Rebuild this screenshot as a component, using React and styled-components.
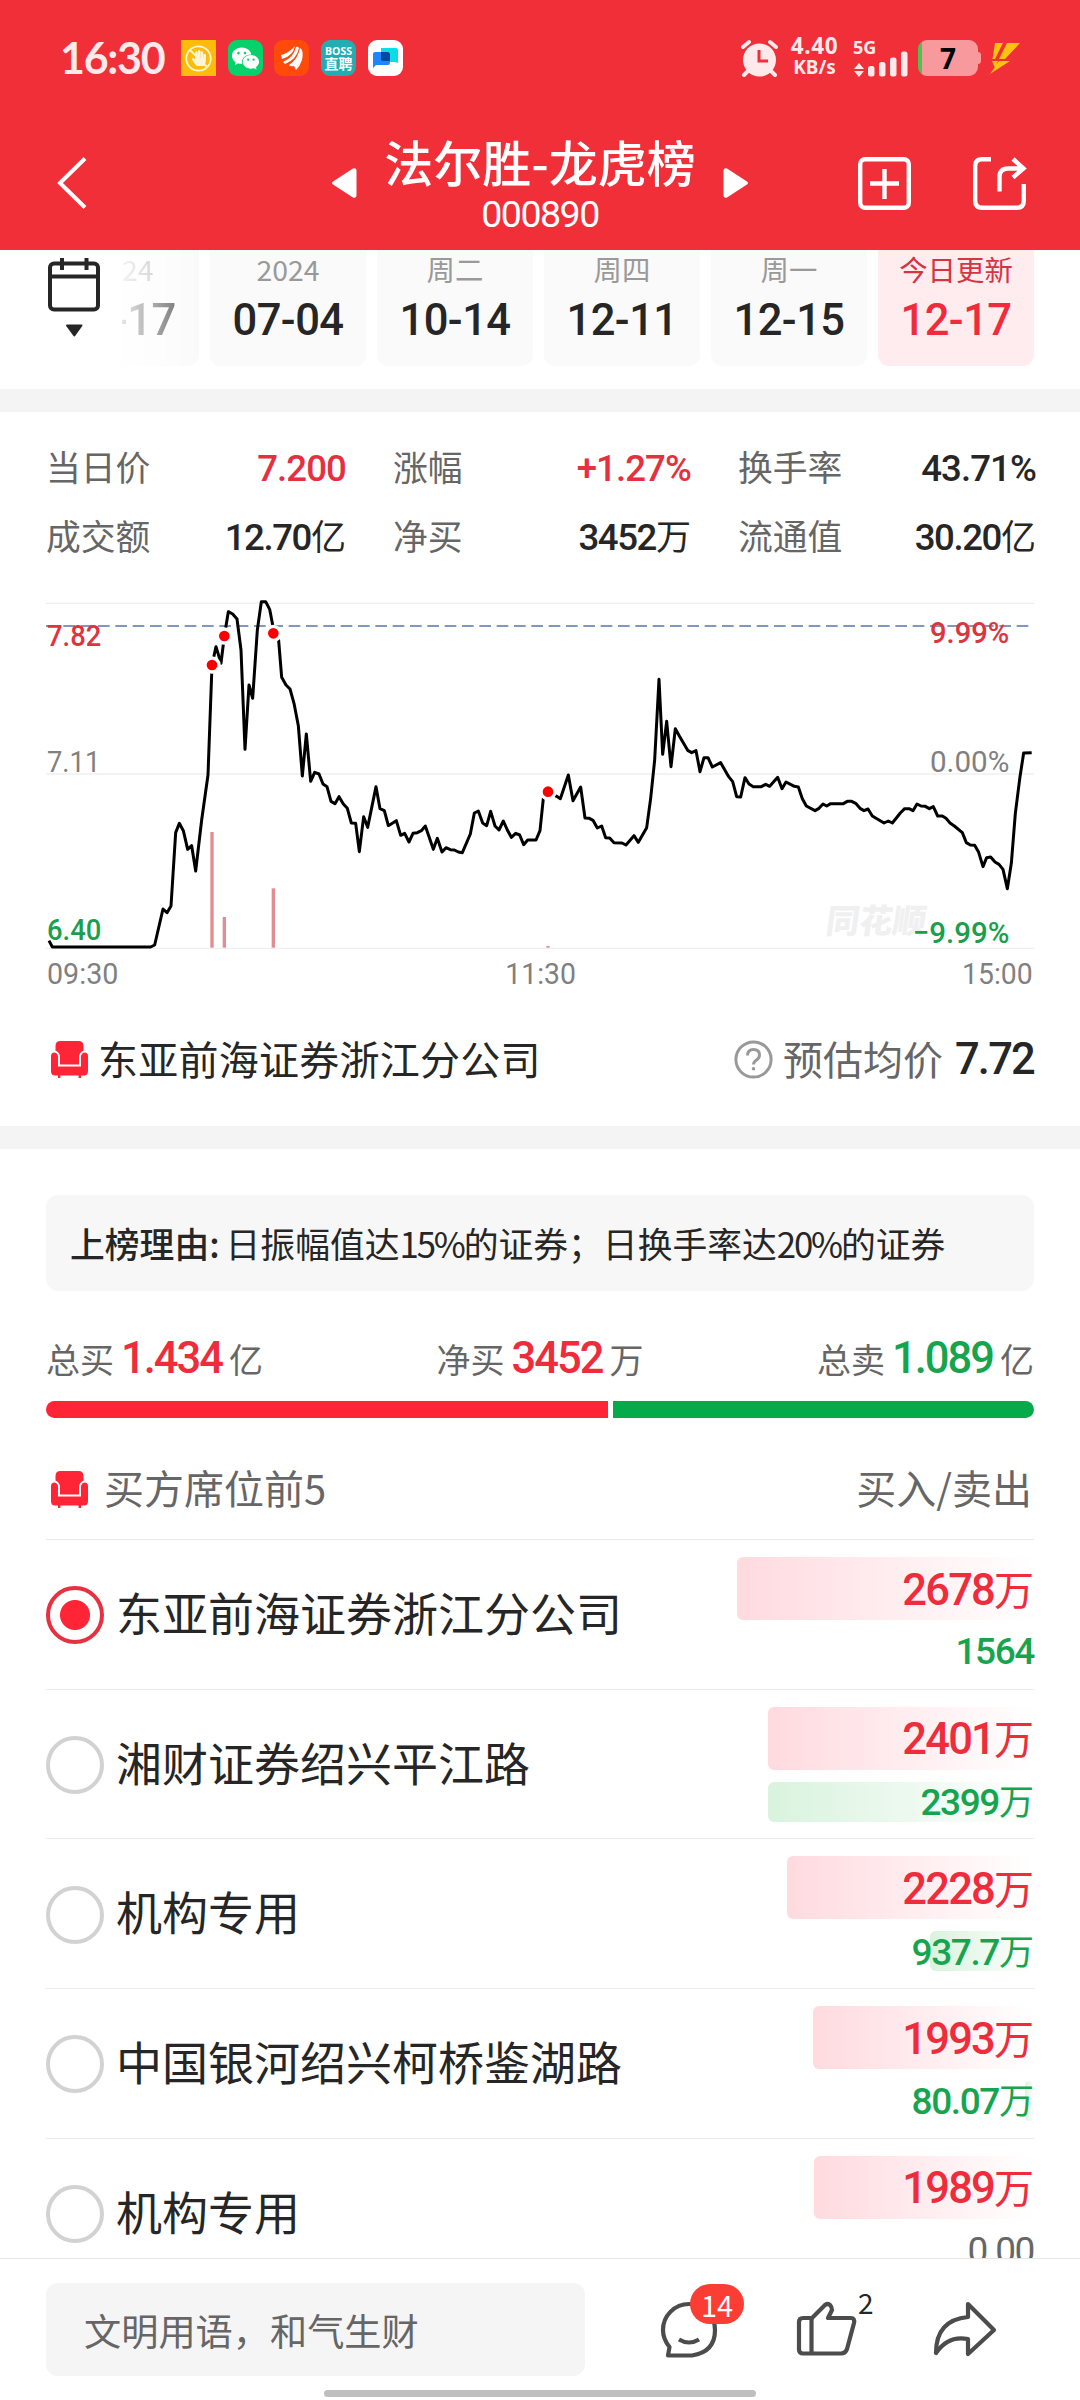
import React from "react";
import styled, { createGlobalStyle, css } from "styled-components";
import { AiFillWechat } from "react-icons/ai";
import { FaHandPaper } from "react-icons/fa";

const RED = "#ff2436";
const GREEN = "#07aa4b";
const INK = "#262626";
const GREY = "#666666";
const CJK = '"Noto Sans CJK SC", sans-serif';
const DIGITS = 'Roboto, "Noto Sans CJK SC", sans-serif';

const GlobalStyle = createGlobalStyle`
  * { box-sizing: border-box; }
  body { margin: 0; background: #fff; font-family: ${CJK}; color: ${INK}; }
`;

const Screen = styled.div`
  width: 1080px;
  height: 2400px;
  display: flex;
  flex-direction: column;
  overflow: hidden;
  background: #fff;
`;

const Icon = styled.svg`
  display: block;
  flex: none;
  overflow: visible;
`;

const Num = styled.span`
  display: inline-block;
  font-family: ${DIGITS};
  font-size: ${(p) => p.$size}px;
  font-weight: ${(p) => p.$weight || 500};
  letter-spacing: ${(p) => (p.$track === undefined ? -1 : p.$track)}px;
  padding-top: ${(p) => p.$drop || 0}px;
  color: ${(p) => p.$color || INK};
  line-height: 1;
  white-space: nowrap;
`;

/* ---------- header ---------- */

const Header = styled.header`
  height: 250px;
  flex: none;
  background: #f12f38;
  color: #fff;
  display: flex;
  flex-direction: column;
`;

const StatusBar = styled.div`
  height: 116px;
  padding: 0 60px;
  display: flex;
  align-items: center;
  justify-content: space-between;
`;

const StatusGroup = styled.div`
  display: flex;
  align-items: center;
  height: 36px;
`;

const Clock = styled.span`
  font-family: Lato, sans-serif;
  font-weight: 700;
  font-size: 43px;
  line-height: 36px;
  width: 121px;
  letter-spacing: -1.3px;
  color: #ffe9eb;
`;

const AppBadge = styled.span`
  width: 35px;
  height: 36px;
  margin-right: 11.7px;
  border-radius: ${(p) => p.$radius}px;
  background: ${(p) => p.$bg};
  display: flex;
  flex-direction: column;
  align-items: center;
  justify-content: center;
  color: #fff;
`;

const BossLine = styled.span`
  font-family: "Open Sans", ${CJK};
  font-size: ${(p) => p.$size}px;
  font-weight: 700;
  line-height: ${(p) => p.$line}px;
`;

const Stacked = styled.div`
  display: flex;
  flex-direction: column;
  align-items: center;
  width: 51px;
  margin: 0 13px 0 11px;
  font-family: "Noto Sans", sans-serif;
  font-weight: 700;
  color: #ffe9eb;
`;

const SpeedValue = styled.span`
  font-size: 22.5px;
  line-height: 19px;
  letter-spacing: 0.6px;
`;

const SpeedUnit = styled.span`
  font-size: 19px;
  line-height: 25px;
  white-space: nowrap;
`;

const Signal = styled.div`
  width: 56px;
  display: flex;
  flex-direction: column;
  color: #ffe9eb;
`;

const SignalLabel = styled.span`
  font: 700 18px/16px "Noto Sans", sans-serif;
  height: 12px;
`;

const Battery = styled.div`
  width: 60px;
  height: 36px;
  margin-left: 9px;
  border-radius: 9px;
  background: linear-gradient(90deg, #4fc255 0 4px, #f8999d 4px);
  display: flex;
  align-items: center;
  justify-content: center;
  font: 700 28px/36px "Noto Sans", sans-serif;
  color: #000;
`;

const BatteryNub = styled.span`
  width: 3px;
  height: 12px;
  border-radius: 0 3px 3px 0;
  background: #f8999d;
  margin-right: 9px;
`;

const NavBar = styled.div`
  height: 134px;
  padding: 0 54px 0 57px;
  display: grid;
  grid-template-columns: 275px 416px 1fr;
  align-items: center;
`;

const TitleRow = styled.div`
  display: flex;
  align-items: center;
  justify-content: space-between;
`;

const TitleText = styled.div`
  display: flex;
  flex-direction: column;
  align-items: center;
  height: 134px;
  padding-top: 16px;
`;

const Title = styled.h1`
  margin: 0;
  font-size: 49px;
  line-height: 58px;
  font-weight: 500;
  white-space: nowrap;
`;

const NavActions = styled.div`
  display: flex;
  justify-content: flex-end;
  gap: 62px;
`;

/* ---------- dates ---------- */

const Content = styled.main`
  height: 2008px;
  flex: none;
  overflow: hidden;
`;

const DateStrip = styled.div`
  height: 139px;
  display: flex;
  padding-left: 48px;
`;

const CalendarButton = styled.div`
  width: 74px;
  padding-top: 8px;
`;

const DateCard = styled.div`
  width: ${(p) => (p.$cut ? 77 : 156)}px;
  height: 116px;
  margin-right: 11px;
  padding-top: 3px;
  border-radius: 0 0 11px ${(p) => (p.$cut ? 0 : 11)}px;
  background: ${(p) => (p.$active ? "#ffecee" : "#fafafa")};
  color: ${(p) => (p.$active ? "#e0303f" : INK)};
  display: flex;
  flex-direction: column;
  align-items: center;
  ${(p) =>
    p.$cut &&
    css`
      align-items: flex-start;
      overflow: hidden;
      mask-image: linear-gradient(90deg, rgba(0, 0, 0, 0.12), rgba(0, 0, 0, 0.55) 65%, #000 100%);
    `}
`;

const DateCaption = styled.span`
  font-size: 28.4px;
  line-height: 32px;
  font-weight: 400;
  color: ${(p) => (p.$active ? "#d53443" : "#999")};
`;

const DateValue = styled(Num)`
  margin-top: 14px;
  margin-left: ${(p) => (p.$cut ? -9 : 0)}px;
`;

const Band = styled.div`
  height: 23px;
  background: #f4f4f4;
`;

/* ---------- stats ---------- */

const Stats = styled.section`
  height: 168px;
  padding: 21px 44px 0 46px;
  display: grid;
  grid-template-columns: 300px 298px 298px;
  grid-auto-rows: 69px;
  column-gap: 47px;
`;

const Stat = styled.div`
  display: flex;
  justify-content: space-between;
  align-items: center;
  white-space: nowrap;
`;

const StatLabel = styled.span`
  font-size: 34.8px;
  line-height: 60px;
  margin-top: -3px;
  color: ${GREY};
`;

const Unit = styled.span`
  font-family: ${CJK};
  font-size: ${(p) => p.$size}px;
  font-weight: 400;
  letter-spacing: 0;
  line-height: 1;
`;

/* ---------- seat summary ---------- */

const SeatLine = styled.div`
  height: 133px;
  padding: 0 46px 0 51px;
  display: flex;
  align-items: center;
  line-height: 60px;
`;

const SeatName = styled.span`
  flex: 1;
  margin: -3px 0 0 10px;
  font-size: 40px;
  letter-spacing: 0.25px;
`;

const AverageLabel = styled.span`
  font-size: 40px;
  color: ${GREY};
  margin: -3px 12px 0 10px;
`;

const Reason = styled.div`
  margin: 46px 46px 0;
  height: 96px;
  border-radius: 12px;
  background: #f7f7f7;
  padding-left: 24px;
  font-size: 34.8px;
  line-height: 96px;
  white-space: nowrap;
`;

const ReasonLabel = styled.b`
  font-weight: 500;
  margin-right: 6px;
`;

const Percent = styled.span`
  letter-spacing: -2.2px;
`;

const Totals = styled.div`
  height: 110px;
  padding: 25px 46px 0;
  display: flex;
  justify-content: space-between;
`;

const Total = styled.div`
  display: flex;
  align-items: baseline;
  gap: 7px;
  font-size: 34px;
  line-height: 86px;
  color: ${GREY};
`;

const RatioBar = styled.div`
  margin: 0 46px;
  height: 17px;
  display: flex;
  gap: 5px;
  border-radius: 9px;
  overflow: hidden;
`;

const RatioPart = styled.span`
  background: ${(p) => p.$color};
`;

/* ---------- seats ---------- */

const SeatHeader = styled.div`
  height: 122px;
  margin: 0 46px;
  padding: 21px 2px 0 5px;
  border-bottom: 1px solid #e9e9e9;
  display: flex;
  align-items: center;
  font-size: 40px;
  line-height: 60px;
  color: ${GREY};
`;

const SeatHeaderTitle = styled.span`
  flex: 1;
  margin: -4px 0 0 16px;
`;

const SeatHeaderSides = styled.span`
  margin-top: -4px;
`;

const SeatRow = styled.div`
  height: 149.7px;
  margin: 0 46px;
  border-bottom: 1px solid #ececec;
  display: grid;
  grid-template-columns: 58px 1fr 300px;
  column-gap: 12px;
  align-items: center;
`;

const Radio = styled.span`
  width: 58px;
  height: 58px;
  margin-top: 2px;
  border-radius: 50%;
  border: 4px solid ${(p) => (p.$on ? "#e83040" : "#d2d2d2")};
  background: ${(p) => (p.$on ? `radial-gradient(circle, ${RED} 14.5px, #fff 15.5px)` : "#fff")};
`;

const RowName = styled.span`
  font-size: 46px;
  line-height: 60px;
  white-space: nowrap;
  margin-top: -7px;
`;

const Amounts = styled.div`
  display: grid;
  grid-template-rows: 63px 40px;
  row-gap: 12px;
`;

const Amount = styled.div`
  display: grid;
  align-items: center;
  justify-items: end;
  & > * {
    grid-area: 1 / 1;
  }
`;

const AmountBar = styled.span`
  height: 100%;
  border-radius: 6px;
  background: linear-gradient(90deg, ${(p) => (p.$buy ? "#ffdadf" : "#d9f3de")}, #fff);
`;

/* ---------- footer ---------- */

const Footer = styled.footer`
  flex: 1;
  border-top: 1px solid #e6e6e6;
  background: #fff;
  display: flex;
  flex-direction: column;
  align-items: center;
`;

const FooterRow = styled.div`
  width: 100%;
  height: 118px;
  padding: 24px 84px 0 46px;
  display: flex;
  align-items: flex-start;
`;

const CommentInput = styled.div`
  width: 539px;
  height: 93px;
  border-radius: 12px;
  background: #f5f5f5;
  padding-left: 38px;
  font-size: 37.2px;
  line-height: 94px;
  color: ${GREY};
`;

const FooterAction = styled.div`
  position: relative;
  width: 62px;
  height: 56px;
  margin: 19px 0 0 ${(p) => p.$gap}px;
`;

const CountBadge = styled.span`
  position: absolute;
  left: 29px;
  top: -18px;
  width: 54px;
  height: 40px;
  border-radius: 20px;
  background: #fb3d33;
  color: #fff;
  text-align: center;
  font: 400 29px/40px "Noto Sans CJK SC", sans-serif;
`;

const LikeCount = styled.span`
  position: absolute;
  left: 61px;
  top: -14px;
  font-size: 28px;
  line-height: 28px;
`;

const HomeIndicator = styled.span`
  width: 432px;
  height: 7px;
  margin-top: 13px;
  border-radius: 4px;
  background: #bfbfbf;
`;

/* ---------- drawings ---------- */

const Armchair = () => (
  <Icon width="37" height="37" viewBox="0 0 37 37" fill={RED}>
    <path d="M4.5 9.5V5Q4.5 0 9.5 0H27.5Q32.5 0 32.5 5V9.5Q28 11.5 28 16V23.5H9V16Q9 11.5 4.5 9.5Z" />
    <path d="M0 15Q0 11.5 3.5 11.500Q7 12 7 16V25.500H30V16Q30 12 33.500 11.500Q37 11.500 37 15V30Q37 34.500 33 34.500H4Q0 34.500 0 30Z" />
    <path d="M7 33h2.400v4H7zM27.600 33H30v4h-2.400z" />
  </Icon>
);

const LINE =
  "147,1082 157,1101 452,1101 464,1095 489,987 501,998 513,978 527,758 538,730 550,752 563,808 575,797 587,873 605,720 624,585 636,255 648,200 663,250 673,168 685,95 698,102 711,117 723,210 735,508 747,315 758,355 772,150 784,65 797,65 809,88 820,145 836,182 845,292 858,315 870,327 882,370 895,437 907,588 919,462 932,604 944,577 957,582 969,612 981,620 993,664 1005,671 1017,650 1030,672 1042,685 1054,729 1067,730 1078,815 1091,710 1103,742 1128,620 1140,686 1153,692 1165,737 1189,722 1202,766 1214,760 1227,786 1239,760 1252,758 1264,752 1276,738 1300,808 1312,775 1326,816 1338,803 1351,809 1363,810 1375,816 1387,818 1411,762 1423,699 1435,693 1448,729 1460,737 1472,694 1485,738 1497,750 1510,723 1522,750 1534,772 1547,760 1559,765 1571,794 1583,780 1608,780 1620,752 1630,655 1644,635 1670,649 1681,656 1705,585 1719,662 1742,621 1755,714 1768,715 1779,721 1792,744 1805,738 1817,773 1829,774 1842,788 1866,789 1878,795 1902,767 1915,787 1940,743 1952,655 1964,540 1977,298 1988,523 2000,424 2013,560 2026,446 2038,468 2063,511 2075,518 2088,512 2100,575 2112,533 2124,533 2137,561 2162,548 2186,590 2198,605 2210,650 2222,651 2235,593 2247,612 2260,620 2284,620 2297,613 2309,619 2333,592 2346,626 2358,606 2383,619 2395,621 2407,656 2419,678 2445,692 2457,685 2469,672 2480,678 2492,671 2530,671 2542,664 2555,664 2567,670 2580,685 2592,692 2604,687 2617,708 2652,729 2665,723 2677,729 2701,699 2714,686 2727,686 2739,692 2751,672 2763,678 2776,679 2788,686 2800,680 2813,708 2827,708 2838,715 2850,729 2863,738 2887,758 2899,788 2911,795 2924,796 2936,817 2949,860 2960,833 2972,831 2985,846 2997,853 3009,868 3022,926 3034,850 3046,700 3060,590 3071,519 3095,518";

const LABELS = [
  { x: 141, y: 197, w: 163, t: "7.82", c: "#e03340", b: 500 },
  { x: 141, y: 576, w: 160, t: "7.11", c: "#808080" },
  { x: 141, y: 1080, w: 163, t: "6.40", c: "#1a9f4d", b: 500 },
  { x: 2790, y: 188, w: 238, t: "9.99%", c: "#e03340", b: 500 },
  { x: 2790, y: 576, w: 238, t: "0.00%", c: "#808080" },
  { x: 2738, y: 1090, w: 290, t: "−9.99%", c: "#1a9f4d", b: 500 },
  { x: 141, y: 1213, w: 214, t: "09:30", c: "#808080" },
  { x: 1516, y: 1213, w: 212, t: "11:30", c: "#808080" },
  { x: 2886, y: 1213, w: 212, t: "15:00", c: "#808080" },
];

const DOTS = [
  [636, 255],
  [673, 168],
  [820, 160],
  [1644, 635],
];

const ChartSvg = styled.svg`
  display: block;
  font-family: ${DIGITS};
  font-size: 91px;
`;

const Chart = () => (
  <ChartSvg width="1080" height="413" viewBox="0 0 3240 1239">
    {[70, 582, 1105].map((y) => (
      <line key={y} x1="138" x2="3102" y1={y} y2={y} stroke="#efefef" strokeWidth="4" />
    ))}
    <line x1="138" x2="3102" y1="138" y2="138" stroke="#8197bd" strokeWidth="6" strokeDasharray="35 17" />
    <text
      x="2474"
      y="1060"
      transform="skewX(-8)"
      style={{ transformOrigin: "2474px 1060px" }}
      fontFamily={CJK}
      fontSize="100"
      fontWeight="900"
      fill="#f0f0f0"
    >
      同花顺
    </text>
    {[
      [636, 756],
      [673, 1011],
      [820, 925],
      [1644, 1098],
    ].map(([x, y]) => (
      <rect key={x} x={x - 5} y={y} width="10" height={1103 - y} fill="#e38d93" />
    ))}
    {LABELS.map((l) => (
      <text
        key={l.t}
        x={l.x}
        y={l.y}
        fill={l.c}
        fontWeight={l.b || 400}
        textLength={l.w}
        lengthAdjust="spacingAndGlyphs"
      >
        {l.t}
      </text>
    ))}
    <polyline points={LINE} fill="none" stroke="#000" strokeWidth="9" strokeLinejoin="round" />
    {DOTS.map(([x, y]) => (
      <circle key={x} cx={x} cy={y} r="21" fill="#fb0000" stroke="#fff" strokeWidth="10" />
    ))}
  </ChartSvg>
);

const DATES = [
  ["2024", "07-04"],
  ["周二", "10-14"],
  ["周四", "12-11"],
  ["周一", "12-15"],
  ["今日更新", "12-17"],
];

const STATS = [
  { label: "当日价", value: "7.200", color: "#e5303f" },
  { label: "涨幅", value: "+1.27%", color: "#e5303f" },
  { label: "换手率", value: "43.71%" },
  { label: "成交额", value: "12.70", unit: "亿" },
  { label: "净买", value: "3452", unit: "万" },
  { label: "流通值", value: "30.20", unit: "亿" },
];

const SEATS = [
  { name: "东亚前海证券浙江分公司", buy: "2678", buyW: 297, sell: "1564", sellW: 0, on: true },
  { name: "湘财证券绍兴平江路", buy: "2401", buyW: 266, sell: "2399", sellW: 266, unit: "万" },
  { name: "机构专用", buy: "2228", buyW: 247, sell: "937.7", sellW: 104, unit: "万" },
  { name: "中国银河绍兴柯桥鉴湖路", buy: "1993", buyW: 221, sell: "80.07", sellW: 9, unit: "万" },
  { name: "机构专用", buy: "1989", buyW: 220, sell: "0.00", sellW: 0, none: true },
];

const Seat = ({ seat }) => (
  <SeatRow>
    <Radio $on={seat.on} />
    <RowName>{seat.name}</RowName>
    <Amounts>
      <Amount>
        <AmountBar $buy style={{ width: seat.buyW }} />
        <Num $size={43.5} $track={-1.8} $drop={3} $color="#ee2c3c">
          {seat.buy}
          <Unit $size={40}>万</Unit>
        </Num>
      </Amount>
      <Amount>
        <AmountBar style={{ width: seat.sellW }} />
        <Num
          $size={37}
          $track={-1.4}
          $weight={seat.none ? 400 : 500}
          $color={seat.none ? GREY : "#17a44e"}
        >
          {seat.sell}
          {seat.unit && <Unit $size={35}>{seat.unit}</Unit>}
        </Num>
      </Amount>
    </Amounts>
  </SeatRow>
);

const Sum = ({ label, value, unit, color }) => (
  <Total>
    {label}
    <Num $size={43.5} $track={-2} $color={color}>
      {value}
    </Num>
    {unit}
  </Total>
);

export default function App() {
  return (
    <Screen>
      <GlobalStyle />
      <Header>
        <StatusBar>
          <StatusGroup>
            <Clock>16:30</Clock>
            <AppBadge $bg="#fdbb0b" $radius={0}>
              <Icon width="27" height="27" viewBox="0 0 27 27" fill="none" stroke="#fff6d8" strokeWidth="1.800">
                <circle cx="13.500" cy="13.500" r="12.200" />
                <FaHandPaper x="6" y="5" size="16" fill="#fff6d8" stroke="none" />
                <path d="M5 5l17 17" />
              </Icon>
            </AppBadge>
            <AppBadge $bg="#07d16a" $radius={9}>
              <AiFillWechat size={31} />
            </AppBadge>
            <AppBadge $bg="#ff4a0a" $radius={9}>
              <Icon width="22" height="24" viewBox="0 0 22 24" fill="#fff">
                <path d="M0 9Q8 7 14 0Q12 10 1 13Z" />
                <path d="M15 1Q17 0 18 2Q16 13 4 18L2 16Q13 11 15 1Z" />
                <path d="M19 2Q23 4 21 14Q19 20 15 24L13 20Q9 21 8 19Q17 13 19 2Z" />
              </Icon>
            </AppBadge>
            <AppBadge $bg="#20aeb3" $radius={9}>
              <BossLine $size={10.5} $line={12}>BOSS</BossLine>
              <BossLine $size={14} $line={14}>直聘</BossLine>
            </AppBadge>
            <AppBadge $bg="#fff" $radius={9}>
              <Icon width="25" height="20" viewBox="0 0 25 20">
                <path d="M9 0h14q2 0 2 2v13l-3-1H10q-2 0-2-2V0z" fill="#06dfe6" />
                <path d="M2 4h12q3 0 3 3v8q0 2-2 2H3l-3 3V6q0-2 2-2z" fill="#1f86ff" />
                <path d="M8 4h6q3 0 3 3v6h-7q-2 0-2-2z" fill="#034a9e" />
              </Icon>
            </AppBadge>
          </StatusGroup>
          <StatusGroup>
            <Icon width="37" height="37" viewBox="0 0 37 37">
              <circle cx="18.500" cy="20" r="16.500" fill="#ffe9eb" />
              <path
                d="M2 7l6-5M35 7l-6-5M7 31l-4 4M30 31l4 4"
                stroke="#ffe9eb"
                strokeWidth="4"
                strokeLinecap="round"
              />
              <path d="M18 10v11h9" fill="none" stroke="#f12f38" strokeWidth="3" />
            </Icon>
            <Stacked>
              <SpeedValue>4.40</SpeedValue>
              <SpeedUnit>KB/s</SpeedUnit>
            </Stacked>
            <Signal>
              <SignalLabel>5G</SignalLabel>
              <Icon width="56" height="26" viewBox="0 0 56 26" fill="#ffe9eb">
                <path d="M1 18l5-6 5 6zM1 20l5 6 5-6z" />
                <rect x="15" y="15" width="6.500" height="10.500" rx="2.500" />
                <rect x="26" y="11" width="6.500" height="14.500" rx="2.500" />
                <rect x="37" y="6.500" width="6.500" height="19" rx="2.500" />
                <rect x="48" y="0.500" width="6.500" height="25" rx="2.500" />
              </Icon>
            </Signal>
            <Battery>7</Battery>
            <BatteryNub />
            <Icon width="30" height="31" viewBox="0 0 30 31" fill="#ffc20e">
              <path d="M5 0h8L5 16H2.500zM17 0h13L15 16H9zM2 18h6l-3 7zM9 18h11L0 31z" />
            </Icon>
          </StatusGroup>
        </StatusBar>
        <NavBar>
          <Icon width="30" height="52" viewBox="0 0 30 52" fill="none" stroke="#fff" strokeWidth="4">
            <path d="M28 1.500L3 26l25 24.500" />
          </Icon>
          <TitleRow>
            <Icon width="25" height="30" viewBox="0 0 25 30" fill="#fff">
              <path d="M1 13.500L21 .5Q24.500-.5 24.500 3V27Q24.500 30.500 21 29.500L1 16.500Q-1 15 1 13.500Z" />
            </Icon>
            <TitleText>
              <Title>法尔胜-龙虎榜</Title>
              <Num $size={37.5} $track={-1.5} $weight={400} $drop={6} $color="#fff">
                000890
              </Num>
            </TitleText>
            <Icon width="25" height="30" viewBox="0 0 25 30" fill="#fff">
              <path d="M24 13.500L4 .5Q.5-.5 .5 3V27Q.5 30.500 4 29.500L24 16.500Q26 15 24 13.500Z" />
            </Icon>
          </TitleRow>
          <NavActions>
            <Icon width="53" height="53" viewBox="0 0 53 53" fill="none" stroke="#fff" strokeWidth="4.400">
              <rect x="2.200" y="2.200" width="48.600" height="48.600" rx="5" />
              <path d="M26.500 12v30M12 26.500h29" />
            </Icon>
            <Icon width="53" height="53" viewBox="0 0 53 53" fill="none" stroke="#fff" strokeWidth="4.400">
              <path d="M18 2.200H9q-6.800 0-6.800 6.800v34.800q0 7 7 7h34.600q7 0 7-7V27" />
              <path d="M26.500 34.500V20q0-8.500 8.500-8.500h15M40 2l10.500 9.500L40 20.500" />
            </Icon>
          </NavActions>
        </NavBar>
      </Header>

      <Content>
        <DateStrip>
          <CalendarButton>
            <Icon width="52" height="80" viewBox="0 0 52 80" fill="none" stroke={INK} strokeWidth="4">
              <rect x="2" y="5.500" width="48" height="46" rx="4" />
              <path d="M2 18.500h48M14 0v12M38.500 0v12" />
              <path d="M19 67.500h14.500l-7.200 10z" fill={INK} strokeWidth="2" strokeLinejoin="round" />
            </Icon>
          </CalendarButton>
          <DateCard $cut>
            <DateCaption>24</DateCaption>
            <DateValue $cut $size={43.5} $track={-0.5}>-17</DateValue>
          </DateCard>
          {DATES.map(([caption, value], i) => (
            <DateCard key={value} $active={i === 4}>
              <DateCaption $active={i === 4}>{caption}</DateCaption>
              <DateValue $size={43.5} $track={-0.5} $color={i === 4 ? "#f02c3c" : INK}>
                {value}
              </DateValue>
            </DateCard>
          ))}
        </DateStrip>
        <Band />
        <Stats>
          {STATS.map((s) => (
            <Stat key={s.label}>
              <StatLabel>{s.label}</StatLabel>
              <Num $size={36.6} $track={s.unit ? -1.4 : -0.9} $drop={s.unit ? 0 : 3} $color={s.color}>
                {s.value}
                {s.unit && <Unit $size={35}>{s.unit}</Unit>}
              </Num>
            </Stat>
          ))}
        </Stats>
        <Chart />
        <SeatLine>
          <Armchair />
          <SeatName>东亚前海证券浙江分公司</SeatName>
          <Icon width="39" height="39" viewBox="0 0 39 39" fill="none" stroke="#999" strokeWidth="3">
            <circle cx="19.500" cy="19.500" r="17.600" />
            <path d="M13.500 15.500q0-6 6-6t6 5.500q0 3-3 5t-3 4.500" />
            <circle cx="19.500" cy="28.800" r="1.800" fill="#999" stroke="none" />
          </Icon>
          <AverageLabel>预估均价</AverageLabel>
          <Num $size={43.5} $track={-1.8} $drop={1}>7.72</Num>
        </SeatLine>
        <Band />
        <Reason>
          <ReasonLabel>上榜理由:</ReasonLabel>
          日振幅值达<Percent>15%</Percent>的证券；日换手率达<Percent>20%</Percent>的证券
        </Reason>
        <Totals>
          <Sum label="总买" value="1.434" unit="亿" color="#ee2c3c" />
          <Sum label="净买" value="3452" unit="万" color="#ee2c3c" />
          <Sum label="总卖" value="1.089" unit="亿" color="#17a44e" />
        </Totals>
        <RatioBar>
          <RatioPart $color={RED} style={{ flex: 562 }} />
          <RatioPart $color={GREEN} style={{ flex: 421 }} />
        </RatioBar>
        <SeatHeader>
          <Armchair />
          <SeatHeaderTitle>买方席位前5</SeatHeaderTitle>
          <SeatHeaderSides>买入/卖出</SeatHeaderSides>
        </SeatHeader>
        {SEATS.map((seat, i) => (
          <Seat key={i} seat={seat} />
        ))}
      </Content>

      <Footer>
        <FooterRow>
          <CommentInput>文明用语，和气生财</CommentInput>
          <FooterAction $gap={76}>
            <Icon width="56" height="56" viewBox="0 0 56 56" fill="none" stroke="#4c4c4c" strokeWidth="4.200">
              <path
                d="M7 53.500l1.500-8.500Q2 37 2 28A26 26 0 1 1 54 28Q54 50 31 53.500Z"
                strokeLinejoin="round"
              />
              <path d="M18 37.500q10 6 20 0" />
            </Icon>
            <CountBadge>14</CountBadge>
          </FooterAction>
          <FooterAction $gap={74}>
            <Icon width="60" height="54" viewBox="0 0 60 54" fill="none" stroke="#4c4c4c" strokeWidth="4.200" strokeLinejoin="round">
              <path d="M2 20q0-4 4-4h9L28 3q3-2 5 0t2 5l-4 8h23q4 0 3 5l-7 26q-1.500 4.500-6 4.500H6q-4 0-4-4z" />
              <path d="M14.500 16v35" />
            </Icon>
            <LikeCount>2</LikeCount>
          </FooterAction>
          <FooterAction $gap={75}>
            <Icon width="62" height="54" viewBox="0 0 62 54" fill="none" stroke="#4c4c4c" strokeWidth="4.200" strokeLinejoin="round">
              <path d="M34 2l26 26-26 24V37Q14 33 2 51Q2 18 34 15Z" />
            </Icon>
          </FooterAction>
        </FooterRow>
        <HomeIndicator />
      </Footer>
    </Screen>
  );
}
